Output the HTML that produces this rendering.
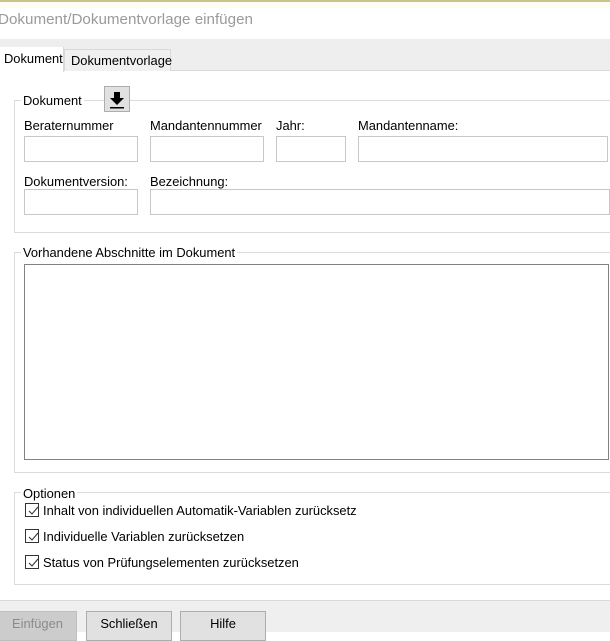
<!DOCTYPE html>
<html><head><style>
*{margin:0;padding:0;box-sizing:border-box}
body{width:610px;height:632px;position:relative;overflow:hidden;background:#fff;font-family:"Liberation Sans",sans-serif;font-size:12.9px;color:#000}
.a{position:absolute}
.inp{position:absolute;border:1px solid #c8c8c8;background:#fff;height:26px}
.grp{position:absolute;border:1px solid #dcdcdc;border-right:none}
.lg{position:absolute;background:#fff;padding:0 2px}
.cb{position:absolute;width:14px;height:14px;border:1px solid #333;background:#fff}
.cb svg{position:absolute;left:1px;top:1px}
.btn{position:absolute;background:#e1e1e1;border:1px solid #adadad;text-align:center;line-height:24px;height:30px}
</style></head><body>
<div class="a" style="left:0;top:0;width:610px;height:2px;background:#c9c58a"></div>
<div class="a" style="left:0;top:2px;width:610px;height:6px;background:#fdfdf3"></div>
<div class="a" style="left:-2px;top:11px;font-size:15.2px;color:#9a9a9a">Dokument/Dokumentvorlage einfügen</div>
<div class="a" style="left:0;top:39px;width:610px;height:31px;background:#eeeeee"></div>
<div class="a" style="left:0;top:70px;width:610px;height:1px;background:#d9d9d9"></div>
<div class="a" style="left:64px;top:49px;width:107px;height:22px;background:#f0f0f0;border:1px solid #d9d9d9;border-bottom:none"></div>
<div class="a" style="left:71px;top:53px">Dokumentvorlage</div>
<div class="a" style="left:0;top:47px;width:64px;height:25px;background:#fff;border-right:1px solid #d9d9d9"></div>
<div class="a" style="left:4px;top:51px">Dokument</div>

<div class="grp" style="left:14px;top:100px;width:600px;height:133px"></div>
<div class="lg" style="left:21px;top:93px">Dokument</div>
<div class="a" style="left:104px;top:86px;width:26px;height:26px;background:#e1e1e1;border:1px solid #adadad"></div>
<svg class="a" style="left:104px;top:86px" width="26" height="26"><path d="M10 6h6v6h4l-7 7-7-7h4z" fill="#000"/><rect x="6" y="21" width="14" height="1.5" fill="#000"/></svg>
<div class="a" style="left:24px;top:118px">Beraternummer</div>
<div class="a" style="left:150px;top:118px">Mandantennummer</div>
<div class="a" style="left:276px;top:118px">Jahr:</div>
<div class="a" style="left:358px;top:118px">Mandantenname:</div>
<div class="inp" style="left:24px;top:136px;width:114px"></div>
<div class="inp" style="left:150px;top:136px;width:114px"></div>
<div class="inp" style="left:276px;top:136px;width:70px"></div>
<div class="inp" style="left:358px;top:136px;width:250px"></div>
<div class="a" style="left:24px;top:174px">Dokumentversion:</div>
<div class="a" style="left:150px;top:174px">Bezeichnung:</div>
<div class="inp" style="left:24px;top:189px;width:114px"></div>
<div class="inp" style="left:150px;top:189px;width:460px"></div>

<div class="grp" style="left:14px;top:252px;width:600px;height:221px"></div>
<div class="lg" style="left:21px;top:245px">Vorhandene Abschnitte im Dokument</div>
<div class="a" style="left:24px;top:264px;width:585px;height:196px;border:1px solid #828282;background:#fff"></div>

<div class="grp" style="left:14px;top:492px;width:600px;height:93px"></div>
<div class="lg" style="left:21px;top:486px">Optionen</div>
<div class="cb" style="left:25px;top:503px"><svg width="12" height="12"><path d="M2 6l3 3 6-7" stroke="#333" fill="none" stroke-width="1.1"/></svg></div>
<div class="a" style="left:43px;top:503px">Inhalt von individuellen Automatik-Variablen zurücksetz</div>
<div class="cb" style="left:25px;top:529px"><svg width="12" height="12"><path d="M2 6l3 3 6-7" stroke="#333" fill="none" stroke-width="1.1"/></svg></div>
<div class="a" style="left:43px;top:529px">Individuelle Variablen zurücksetzen</div>
<div class="cb" style="left:25px;top:555px"><svg width="12" height="12"><path d="M2 6l3 3 6-7" stroke="#333" fill="none" stroke-width="1.1"/></svg></div>
<div class="a" style="left:43px;top:555px">Status von Prüfungselementen zurücksetzen</div>

<div class="a" style="left:0;top:600px;width:610px;height:32px;background:#efefef;border-top:1px solid #dadada"></div>
<div class="btn" style="left:-2px;top:611px;width:79px;background:#cccccc;border-color:#bfbfbf;color:#8a8a8a">Einfügen</div>
<div class="btn" style="left:86px;top:611px;width:86px">Schließen</div>
<div class="btn" style="left:180px;top:611px;width:86px">Hilfe</div>
</body></html>
